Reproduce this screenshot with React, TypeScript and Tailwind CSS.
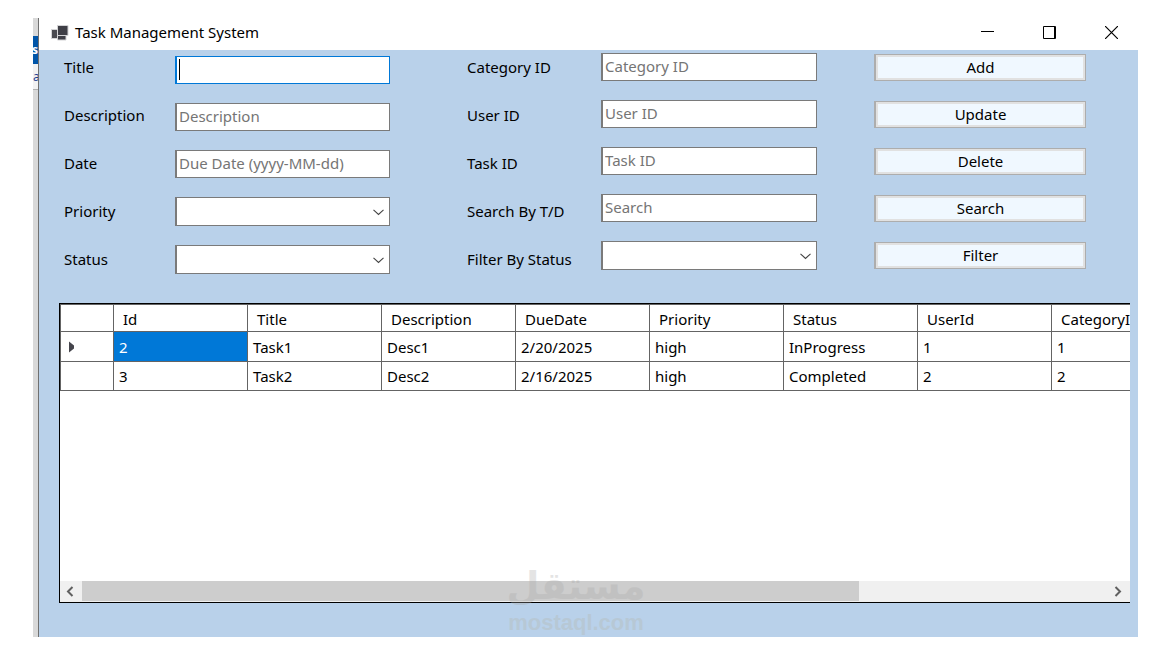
import { useState } from "react";

type Task = { id: number; title: string; description: string; dueDate: string; priority: string; status: string; userId: number; categoryId: number };

const tasks: Task[] = [
  { id: 2, title: "Task1", description: "Desc1", dueDate: "2/20/2025", priority: "high", status: "InProgress", userId: 1, categoryId: 1 },
  { id: 3, title: "Task2", description: "Desc2", dueDate: "2/16/2025", priority: "high", status: "Completed", userId: 2, categoryId: 2 },
];

const columns: { key: keyof Task; label: string }[] = [
  { key: "id", label: "Id" },
  { key: "title", label: "Title" },
  { key: "description", label: "Description" },
  { key: "dueDate", label: "DueDate" },
  { key: "priority", label: "Priority" },
  { key: "status", label: "Status" },
  { key: "userId", label: "UserId" },
  { key: "categoryId", label: "CategoryId" },
];

type Field = { id: string; label: string; placeholder?: string; options?: string[] };

const detailFields: Field[] = [
  { id: "title", label: "Title" },
  { id: "description", label: "Description", placeholder: "Description" },
  { id: "date", label: "Date", placeholder: "Due Date (yyyy-MM-dd)" },
  { id: "priority", label: "Priority", options: [] },
  { id: "status", label: "Status", options: [] },
];

const lookupFields: Field[] = [
  { id: "category-id", label: "Category ID", placeholder: "Category ID" },
  { id: "user-id", label: "User ID", placeholder: "User ID" },
  { id: "task-id", label: "Task ID", placeholder: "Task ID" },
  { id: "search", label: "Search By T/D", placeholder: "Search" },
  { id: "filter-status", label: "Filter By Status", options: [] },
];

function Control({ field }: { field: Field }) {
  if (field.options) {
    return (
      <div className="relative">
        <select id={field.id} className="block h-[29px] w-full appearance-none border border-l-2 border-[#7a7a7a] bg-white outline-none">
          <option></option>
        </select>
        <svg className="pointer-events-none absolute top-3 right-1.5" width="11" height="7" viewBox="0 0 11 7" fill="none" stroke="#444" strokeWidth="1.1">
          <path d="M.5.8 5.5 5.5 10.5.8" />
        </svg>
      </div>
    );
  }
  const isTitle = field.id === "title";
  return (
    <div className="relative">
      <input
        id={field.id}
        placeholder={field.placeholder}
        className={
          "block h-7 w-full border border-l-2 bg-white px-0.5 pb-0.5 text-black outline-none placeholder:text-[#757575] placeholder:opacity-100 " +
          (isTitle ? "border-[#0078d7]" : "border-[#7a7a7a]")
        }
      />
      {isTitle && <span className="pointer-events-none absolute top-[3px] left-1 h-[21px] w-px bg-black" />}
    </div>
  );
}

function FieldGroup({ fields, labelClass, controlClass }: { fields: Field[]; labelClass: string; controlClass: string }) {
  return (
    <div className="flex items-start">
      <div className={"flex shrink-0 flex-col gap-[14px] " + labelClass}>
        {fields.map((f) => (
          <label key={f.id} htmlFor={f.id} className="flex h-[34px] items-center whitespace-nowrap">
            {f.label}
          </label>
        ))}
      </div>
      <div className={"flex min-w-0 flex-1 flex-col gap-[19px] " + controlClass}>
        {fields.map((f) => (
          <Control key={f.id} field={f} />
        ))}
      </div>
    </div>
  );
}

function TitleBar() {
  return (
    <header className="flex h-8 items-center justify-between bg-white pr-[19px] pb-1 pl-3">
      <div className="flex items-center gap-1.5">
        <svg width="18" height="17" viewBox="0 0 18 17" aria-hidden="true">
          <g stroke="#d4d4d6" strokeWidth="1">
            <path d="M.5 5.500h6v9h-6z" fill="#4a4a50" />
            <path d="M6.500 11.500h8.500v4.500H6.500z" fill="#3f3f46" />
            <path d="M6.500 1.500h10.500v10H6.500z" fill="#3f3f46" />
          </g>
        </svg>
        <h1>Task Management System</h1>
      </div>
      <div className="flex items-center gap-[47px]">
        <button aria-label="Minimize" className="flex h-7 w-[15px] items-center justify-center">
          <svg width="13" height="13" viewBox="0 0 13 13" stroke="#000" fill="none"><path d="M0 5.500h13" /></svg>
        </button>
        <button aria-label="Maximize" className="flex h-7 w-[15px] items-center justify-center">
          <svg width="13" height="13" viewBox="0 0 13 13" stroke="#000" fill="none"><path d="M.5.5h12v12H.5zM11.500.5v12" /></svg>
        </button>
        <button aria-label="Close" className="flex h-7 w-[15px] items-center justify-center">
          <svg width="13" height="13" viewBox="0 0 13 13" stroke="#000" fill="none" strokeWidth="1.200"><path d="M0 0l13 13M13 0 0 13" /></svg>
        </button>
      </div>
    </header>
  );
}

function TaskGrid() {
  const [selected, setSelected] = useState(2);
  return (
    <section className="flex min-h-0 flex-1 flex-col border-y border-l border-black bg-white">
      <div className="min-h-0 flex-1 overflow-hidden border-t border-[#646464]">
        <table className="w-[1126px] table-fixed border-separate border-spacing-0 text-left">
          <colgroup>
            <col className="w-[54px]" />
            {columns.map((c) => <col key={c.key} className="w-[134px]" />)}
          </colgroup>
          <thead>
            <tr className="h-[27px]">
              <th className="border-r border-b border-l border-[#646464]" aria-label="Row"></th>
              {columns.map((c) => (
                <th key={c.key} scope="col" className="border-r border-b border-[#646464] pt-0.5 pb-0 pl-[9px] leading-[22px] font-normal">{c.label}</th>
              ))}
            </tr>
          </thead>
          <tbody>
            {tasks.map((t, i) => (
              <tr key={t.id} className={i === 0 ? "h-[30px]" : "h-[29px]"}>
                <td className="border-r border-b border-l border-[#646464] pl-[7px]">
                  {i === 0 && (
                    <svg width="7" height="12" viewBox="0 0 7 12" aria-label="Current row"><path d="M1 .5 6 4.500v3L1 11.500z" fill="#45454c" /></svg>
                  )}
                </td>
                {columns.map((c) => {
                  const active = c.key === "id" && t.id === selected;
                  return (
                    <td
                      key={c.key}
                      onClick={() => c.key === "id" && setSelected(t.id)}
                      className={"border-r border-b border-[#646464] py-0 pl-[5px] leading-[22px] " + (active ? "bg-[#0078d7] text-white" : "")}
                    >
                      {t[c.key]}
                    </td>
                  );
                })}
              </tr>
            ))}
          </tbody>
        </table>
      </div>
      <div className="flex h-[21px] bg-[#f0f0f0]">
        <button aria-label="Scroll left" className="flex w-[22px] items-center justify-center pr-0.5">
          <svg width="8" height="11" viewBox="0 0 8 11" fill="none" stroke="#606060" strokeWidth="2"><path d="M6.500 1 2 5.500l4.500 4.500" /></svg>
        </button>
        <div className="flex-1 pb-px">
          <div className="h-full w-[75.7%] bg-[#cdcdcd]" />
        </div>
        <button aria-label="Scroll right" className="flex w-[22px] items-center justify-center pr-0.5">
          <svg width="8" height="11" viewBox="0 0 8 11" fill="none" stroke="#606060" strokeWidth="2"><path d="M1.500 1 6 5.500 1.500 10" /></svg>
        </button>
      </div>
    </section>
  );
}

function BackgroundEdge() {
  return (
    <div className="flex w-1.5 shrink-0 flex-col overflow-hidden border-r border-[#707070] bg-[#d9d9d9] text-xs" aria-hidden="true">
      <div className="h-[18px]" />
      <div className="flex h-7 items-center justify-end bg-[#0055a8] font-bold text-white">s</div>
      <div className="flex h-[26px] items-center border-b border-[#b0b0b0] bg-[#f2f2f2] text-[#1c3f94]">a</div>
    </div>
  );
}

export default function App() {
  return (
    <div className="flex min-h-screen bg-white pt-[18px] pr-[14px] pb-[11px] pl-[33px] font-['Noto_Sans',sans-serif] text-[15px] leading-[22px] text-black">
      <BackgroundEdge />
      <main className="relative flex min-w-0 flex-1 flex-col bg-[#b9d1ea]">
        <TitleBar />
        <form className="grid grid-cols-[346fr_350fr_212fr] gap-x-[57px] pr-[52px] pl-[25px]" onSubmit={(e) => e.preventDefault()}>
          <FieldGroup fields={detailFields} labelClass="w-[111px]" controlClass="pt-1.5 pr-5" />
          <FieldGroup fields={lookupFields} labelClass="w-[134px]" controlClass="pt-[3px]" />
          <div className="flex flex-col gap-5 pt-1">
            {["Add", "Update", "Delete", "Search", "Filter"].map((name) => (
              <button key={name} type="button" className="h-[27px] border border-l-2 border-[#adadad] bg-[#f0f8ff] pb-0.5 leading-[20px] ring-2 ring-[#e1e1e1] ring-inset">
                {name}
              </button>
            ))}
          </div>
        </form>
        <div className="flex flex-1 flex-col pt-[27px] pr-2 pb-[34px] pl-5">
          <TaskGrid />
        </div>
        <div className="pointer-events-none absolute bottom-0 left-[466px] flex w-[142px] flex-col items-center text-[#a8a8a8] opacity-30">
          <span lang="ar" dir="rtl" className="font-['DejaVu_Sans',sans-serif] text-[38px] leading-[46px] font-bold">مستقل</span>
          <span className="font-['Liberation_Sans',sans-serif] text-[22px] leading-[28px] font-bold text-[#b4b4a8]">mostaql.com</span>
        </div>
      </main>
    </div>
  );
}
